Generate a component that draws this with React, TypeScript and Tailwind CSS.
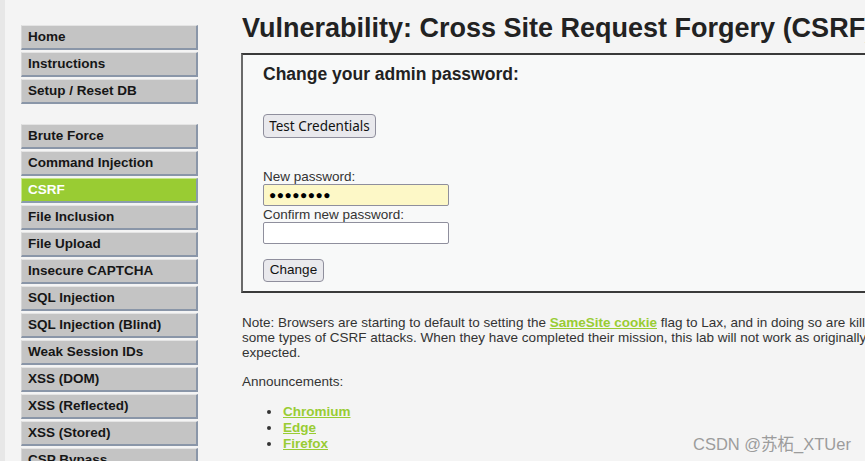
import React from 'react';

const menuTop = ['Home', 'Instructions', 'Setup / Reset DB'];
const menuVulns = [
  'Brute Force',
  'Command Injection',
  'CSRF',
  'File Inclusion',
  'File Upload',
  'Insecure CAPTCHA',
  'SQL Injection',
  'SQL Injection (Blind)',
  'Weak Session IDs',
  'XSS (DOM)',
  'XSS (Reflected)',
  'XSS (Stored)',
  'CSP Bypass',
];

const MenuItem: React.FC<{ label: string; selected?: boolean }> = ({ label, selected }) => (
  <li
    className={`h-[25px] pl-[6px] flex items-center text-[13.5px] font-bold border-t border-l border-b-2 border-r-2 ${
      selected
        ? 'bg-[#99cc33] text-white border-t-[#c8e68c] border-l-[#c8e68c] border-b-[#8a9cae] border-r-[#8a9cae]'
        : 'bg-[#c4c4c4] text-[#161616] border-t-[#e4e4e4] border-l-[#d6d6d6] border-b-[#8a96a8] border-r-[#8a96a8]'
    }`}
  >
    {label}
  </li>
);

const App: React.FC = () => {
  return (
    <div
      className="relative w-[865px] h-[461px] overflow-hidden bg-[#f4f4f4] text-[#333] flex"
      style={{ fontFamily: '"Liberation Sans", Arial, sans-serif' }}
    >
      {/* left strip */}
      <div className="w-[5px] shrink-0 bg-[#e7e7e7]" />

      {/* Menu */}
      <div className="w-[177px] shrink-0 ml-[16px] pt-[25px]">
        <ul className="flex flex-col gap-[2px]">
          {menuTop.map((m) => (
            <MenuItem key={m} label={m} />
          ))}
        </ul>
        <ul className="flex flex-col gap-[2px] mt-[20px]">
          {menuVulns.map((m) => (
            <MenuItem key={m} label={m} selected={m === 'CSRF'} />
          ))}
        </ul>
      </div>

      {/* Main body */}
      <div className="ml-[43px] w-[760px] shrink-0">
        <h1 className="ml-[1px] mt-[13px] text-[27px] leading-[30px] font-bold text-[#222] whitespace-nowrap">
          Vulnerability: Cross Site Request Forgery (CSRF)
        </h1>

        <div className="mt-[10px] h-[240px] border-2 border-[#3a3a3a] border-l-[#6a6a6a] bg-[#f8f9f9] pl-[20px] pt-[8px]">
          <h3 className="text-[17.5px] leading-[22px] font-bold text-[#222]">Change your admin password:</h3>

          <button
            className="mt-[29px] h-[24px] w-[113px] rounded-[4px] border border-[#8f8f9d] bg-[#e9e9ed] text-[13.5px] text-[#111] flex items-center justify-center"
            style={{ fontFamily: '"Noto Sans", "Open Sans", sans-serif' }}
          >
            Test Credentials
          </button>

          <div className="mt-[31px] text-[13.5px] leading-[15px] text-[#333]">New password:</div>
          <div className="w-[186px] h-[22px] rounded-[2px] border border-[#8f8f9d] bg-[#fdf8c7] flex items-center pl-[5px] text-[12px] tracking-[0.5px] text-black">
            ●●●●●●●●
          </div>
          <div className="mt-[1px] text-[13.5px] leading-[15px] text-[#333]">Confirm new password:</div>
          <div className="w-[186px] h-[22px] rounded-[2px] border border-[#8f8f9d] bg-white" />

          <button className="mt-[15px] h-[23px] w-[61px] rounded-[4px] border border-[#8f8f9d] bg-[#e9e9ed] text-[13.5px] text-[#111] flex items-center justify-center">
            Change
          </button>
        </div>

        <p className="ml-[1px] mt-[22px] text-[13.5px] leading-[15px] text-[#333] whitespace-nowrap">
          Note: Browsers are starting to default to setting the{' '}
          <span className="font-bold text-[#99cc33] underline">SameSite cookie</span> flag to Lax, and in doing so are killing off
          <br />
          some types of CSRF attacks. When they have completed their mission, this lab will not work as originally
          <br />
          expected.
        </p>

        <p className="ml-[1px] mt-[14px] text-[13.5px] leading-[15px] text-[#333]">Announcements:</p>

        <ul className="ml-[41px] mt-[15px] list-disc text-[13.5px] leading-[16px]">
          {['Chromium', 'Edge', 'Firefox'].map((b) => (
            <li key={b} className="pl-[1px]">
              <span className="font-bold text-[#99cc33] underline">{b}</span>
            </li>
          ))}
        </ul>
      </div>

      {/* watermark */}
      <div
        className="absolute left-[693px] top-[432px] text-[16.5px] text-[#9c9c9c] whitespace-nowrap"
        style={{ fontFamily: '"Liberation Sans", "Noto Sans CJK SC", sans-serif' }}
      >
        CSDN @苏柘_XTUer
      </div>
    </div>
  );
};

export default App;
